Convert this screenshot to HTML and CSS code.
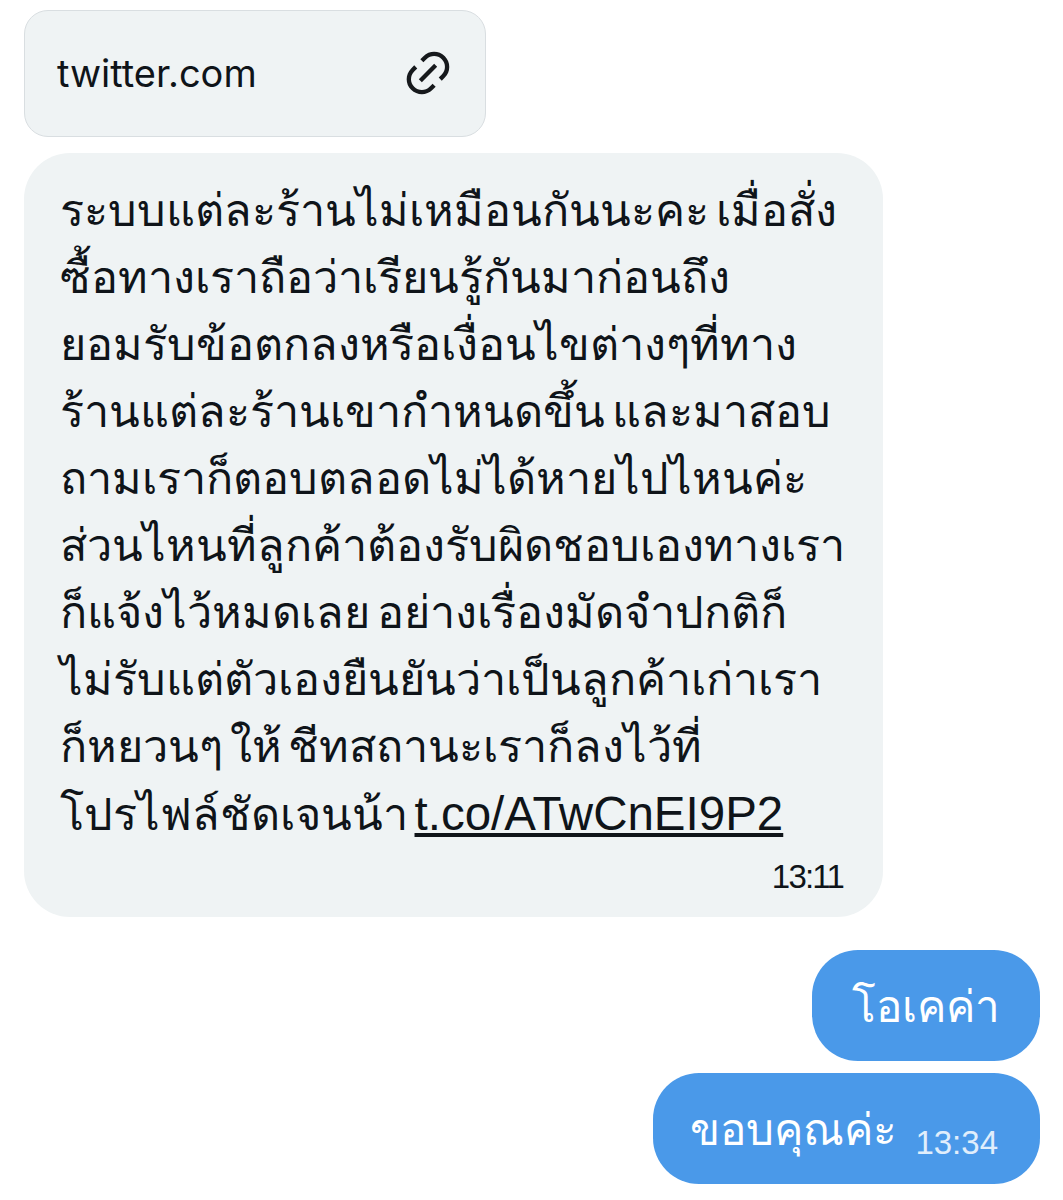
FILE: index.html
```html
<!DOCTYPE html>
<html lang="th">
<head>
  <meta charset="UTF-8">
  <title>Messages</title>
  <link rel="stylesheet" href="styles.css">
</head>
<body>

<div class="thread">
  <div class="link-card">
    <span class="link-host">twitter.com</span>
    <svg class="link-icon" viewBox="0 0 24 24" fill="#16191c">
      <path d="M18.36 5.64c-1.95-1.96-5.11-1.96-7.07 0L9.88 7.05 8.46 5.64l1.42-1.42c2.73-2.73 7.16-2.73 9.9 0 2.73 2.74 2.73 7.17 0 9.9l-1.42 1.42-1.41-1.42 1.41-1.41c1.96-1.96 1.96-5.12 0-7.07zm-2.12 3.53l-7.07 7.07-1.41-1.41 7.07-7.07 1.41 1.41zm-12.02.71l1.42-1.42 1.41 1.42-1.41 1.41c-1.96 1.96-1.96 5.12 0 7.07 1.95 1.96 5.11 1.96 7.07 0l1.41-1.41 1.42 1.41-1.42 1.42c-2.73 2.73-7.16 2.73-9.9 0-2.73-2.74-2.73-7.17 0-9.9z"/>
    </svg>
  </div>

  <div class="bubble-in">
    <div class="msg-line">ระบบแต่ละร้านไม่เหมือนกันนะคะ เมื่อสั่ง</div>
    <div class="msg-line">ซื้อทางเราถือว่าเรียนรู้กันมาก่อนถึง</div>
    <div class="msg-line">ยอมรับข้อตกลงหรือเงื่อนไขต่างๆที่ทาง</div>
    <div class="msg-line">ร้านแต่ละร้านเขากำหนดขึ้น และมาสอบ</div>
    <div class="msg-line">ถามเราก็ตอบตลอดไม่ได้หายไปไหนค่ะ</div>
    <div class="msg-line">ส่วนไหนที่ลูกค้าต้องรับผิดชอบเองทางเรา</div>
    <div class="msg-line">ก็แจ้งไว้หมดเลย อย่างเรื่องมัดจำปกติก็</div>
    <div class="msg-line">ไม่รับแต่ตัวเองยืนยันว่าเป็นลูกค้าเก่าเรา</div>
    <div class="msg-line">ก็หยวนๆ ให้ ชีทสถานะเราก็ลงไว้ที่</div>
    <div class="msg-line">โปรไฟล์ชัดเจนน้า <a class="msg-link" href="#">t.co/ATwCnEI9P2</a></div>
    <div class="msg-time">13:11</div>
  </div>

  <div class="bubble-out bubble-first">โอเคค่า</div>
  <div class="bubble-out bubble-last">ขอบคุณค่ะ <span class="out-time">13:34</span></div>
</div>

</body>
</html>
```

FILE: styles.css
```css
html, body {
  margin: 0;
  padding: 0;
  background-color: white;
}
body {
  font-family: "Liberation Sans", "Noto Sans", sans-serif;
  color: #0f1419;
}
.thread {
  display: flex;
  flex-direction: column;
  padding: 10px 23px 16px 24px;
}
.link-card {
  box-sizing: border-box;
  width: 462px;
  height: 127px;
  display: flex;
  align-items: center;
  justify-content: space-between;
  padding: 0 31px 2px 32px;
  background-color: #eff3f4;
  border: 1px solid #d9dee1;
  border-radius: 24px;
}
.link-host {
  font-family: Inter, "Liberation Sans", sans-serif;
  font-size: 38px;
}
.link-icon {
  width: 52px;
  height: 52px;
}
.bubble-in {
  box-sizing: border-box;
  width: 859px;
  height: 764px;
  margin-top: 16px;
  padding: 24px 40px 0 36px;
  background-color: #eff3f4;
  border-radius: 46px;
  font-size: 45px;
  word-spacing: -6px;
}
.msg-line {
  height: 67px;
  line-height: 67px;
  white-space: nowrap;
}
.msg-link {
  color: #0f1419;
  font-size: 47.5px;
}
.msg-time {
  margin-top: 11px;
  text-align: right;
  font-size: 33px;
  letter-spacing: -1.8px;
  color: #0f1419;
}
.bubble-out {
  box-sizing: border-box;
  align-self: flex-end;
  height: 111px;
  display: flex;
  align-items: center;
  background-color: #4a99e9;
  color: white;
  border-radius: 46px;
  font-size: 44px;
  white-space: pre;
}
.bubble-first {
  margin-top: 33px;
  padding: 0 40px;
}
.bubble-last {
  margin-top: 12px;
  padding: 0 42px 0 37px;
}
.out-time {
  font-size: 33px;
  color: #e0eefc;
  margin-top: 28px;
  margin-left: 6px;
}
```
